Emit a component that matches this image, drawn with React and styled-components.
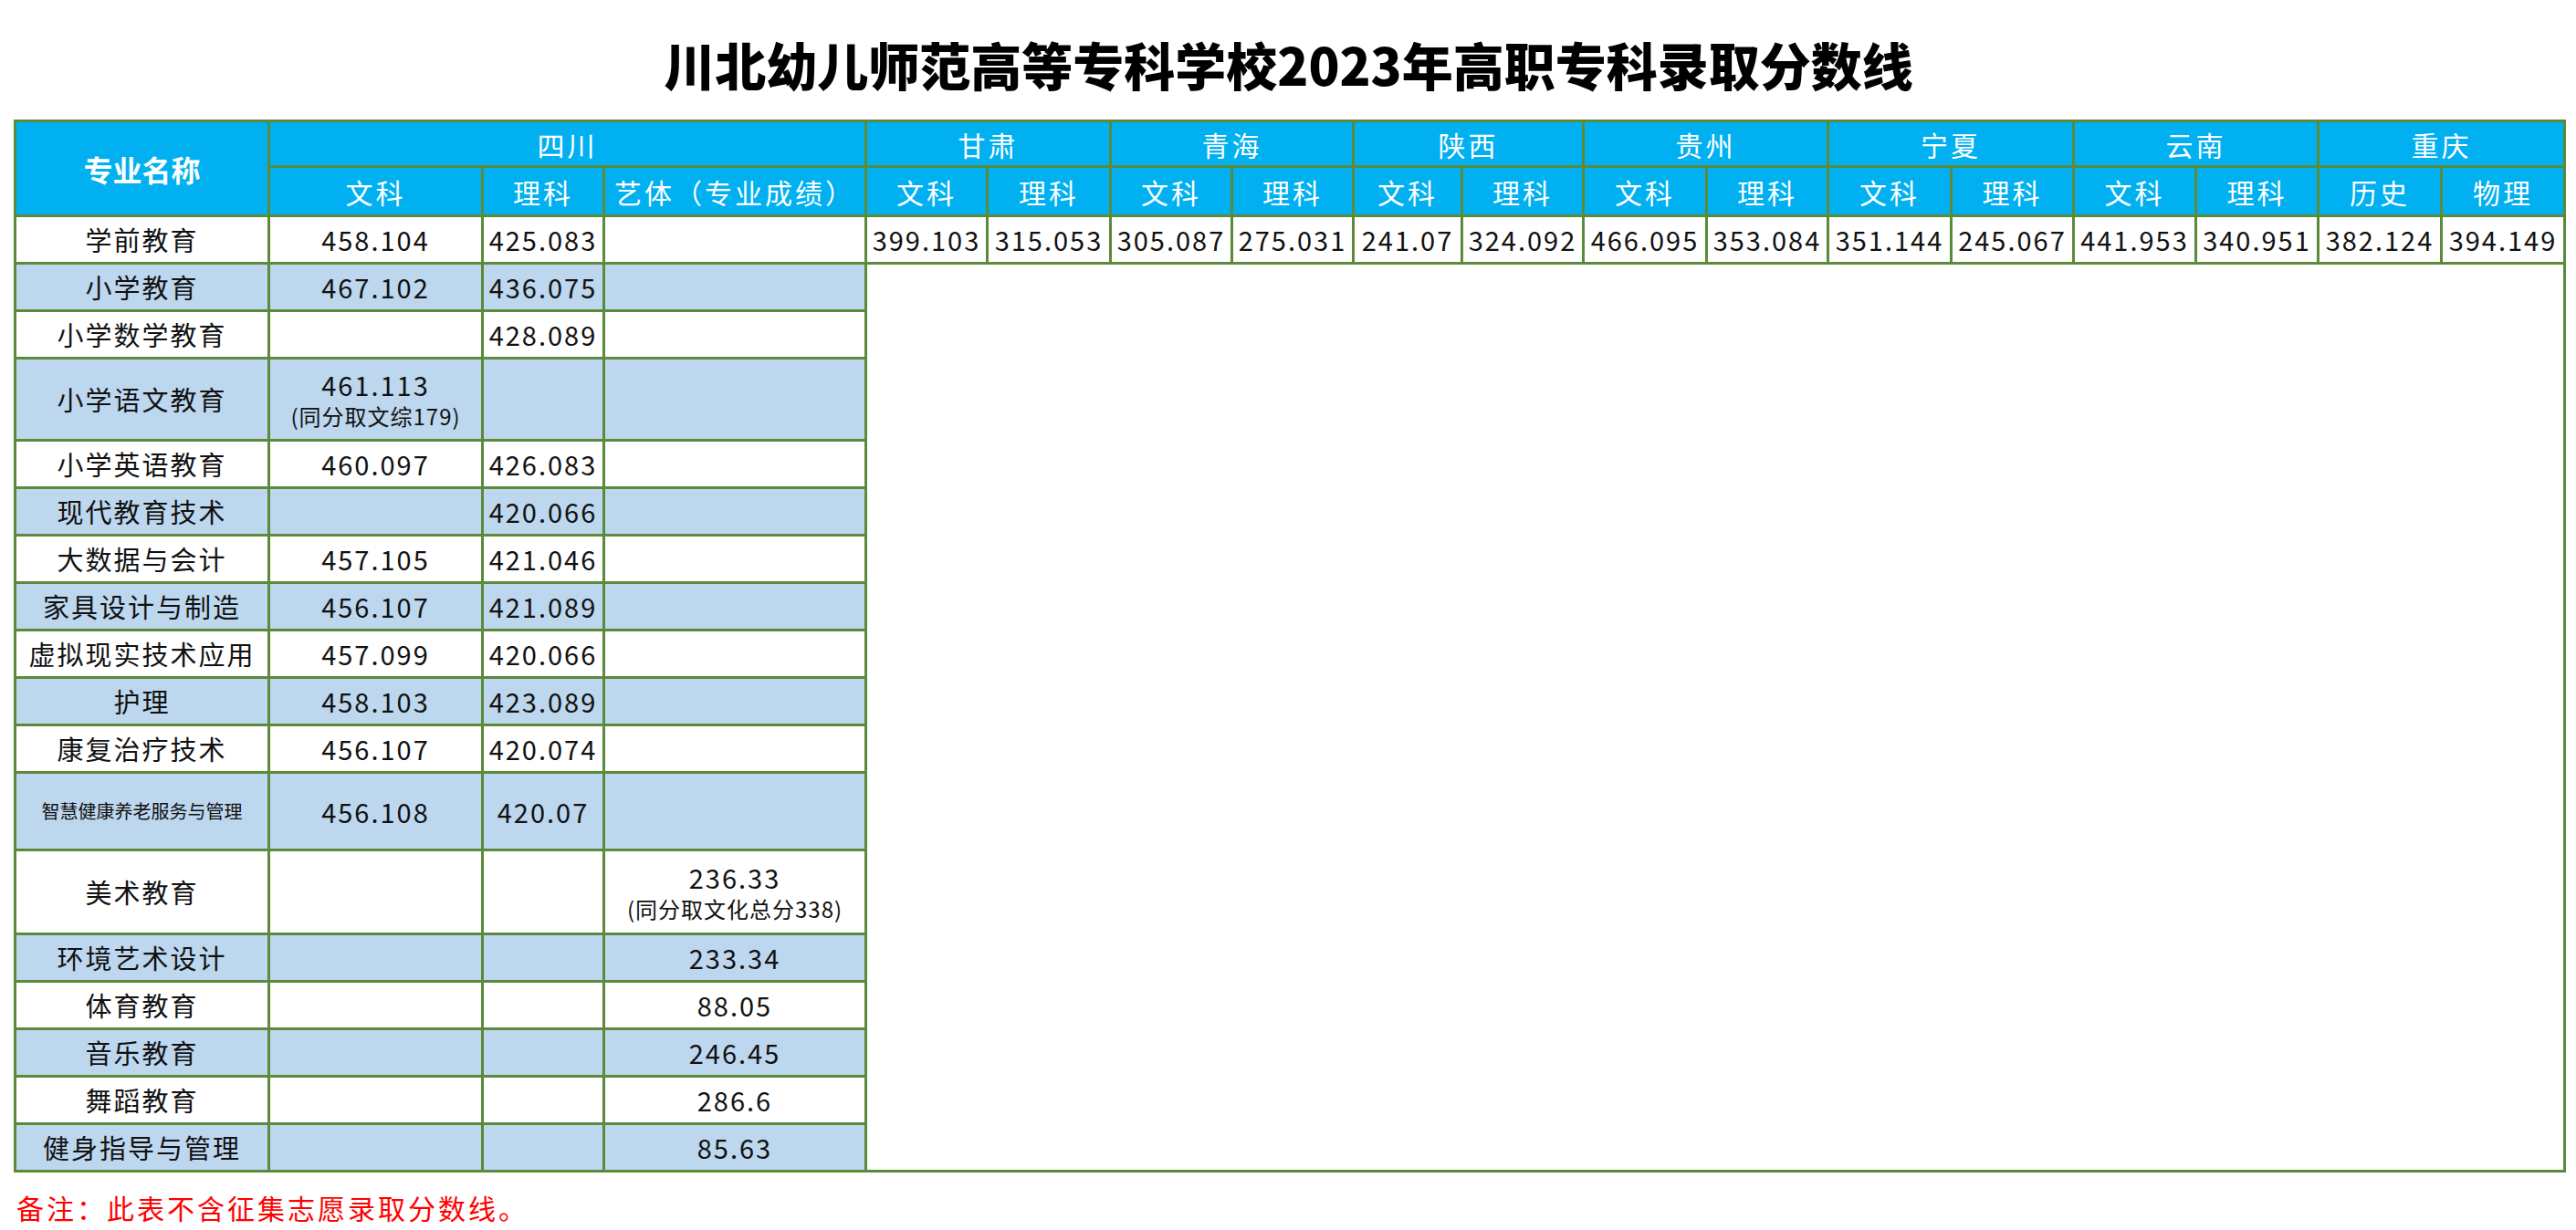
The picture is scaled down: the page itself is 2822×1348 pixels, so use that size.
import React from "react";
import styled, { createGlobalStyle } from "styled-components";

const Global = createGlobalStyle`
  html, body { margin: 0; padding: 0; background: #fff; }
  body { font-family: "Noto Sans CJK SC", "Noto Sans", sans-serif; }
`;

const Page = styled.div`
  width: 2822px;
  padding: 0 14px 0 15px;
  box-sizing: border-box;
`;

const Title = styled.h1`
  margin: 0;
  height: 131px;
  display: flex;
  align-items: center;
  justify-content: center;
  padding-top: 8px;
  box-sizing: border-box;
  font-family: "Noto Sans CJK SC", sans-serif;
  font-weight: 900;
  font-size: 56px;
  letter-spacing: 0;
  color: #000;
`;

const Table = styled.table`
  border-collapse: collapse;
  table-layout: fixed;
  width: 2793px;
  border: 3px solid #5b8a3a;
`;

const Th = styled.th`
  background: #00b0f0;
  color: #fff;
  font-weight: ${p => (p.$bold ? 700 : 400)};
  font-size: ${p => (p.$bold ? 32 : 30)}px;
  letter-spacing: ${p => (p.$bold ? 0 : 3)}px;
  border: 3px solid #5b8a3a;
  padding: 0;
  text-align: center;
  white-space: nowrap;
`;

const HeadRow = styled.tr`
  height: ${p => p.$h}px;
`;

const Row = styled.tr`
  height: ${p => p.$h}px;
`;

const Td = styled.td`
  background: ${p => (p.$alt ? "#bdd7ee" : "#fff")};
  color: #111;
  font-size: ${p => (p.$small ? 20 : 29)}px;
  letter-spacing: ${p => (p.$small ? 0 : 2)}px;
  border: 3px solid #5b8a3a;
  padding: 0;
  text-align: center;
  line-height: 1.2;
  white-space: nowrap;
  overflow: hidden;
`;

const Blank = styled.td`
  background: #fff;
  border: 3px solid #5b8a3a;
`;

const Footer = styled.div`
  color: #ff0000;
  font-size: 30px;
  letter-spacing: 3px;
  padding: 16px 0 0 3px;
`;

const NoteText = styled.span`
  display: block;
  font-size: 24px;
  line-height: 1.3;
  letter-spacing: 1px;
  margin-top: 2px;
`;

const widths = [278, 234, 133, 287, 133, 135, 133, 133, 119, 133, 135, 133, 135, 134, 134, 134, 135, 135];

const provinces = ["甘肃", "青海", "陕西", "贵州", "宁夏", "云南", "重庆"];
const subs = ["文科", "理科", "文科", "理科", "文科", "理科", "文科", "理科", "文科", "理科", "文科", "理科", "历史", "物理"];
const firstRight = ["399.103", "315.053", "305.087", "275.031", "241.07", "324.092", "466.095", "353.084", "351.144", "245.067", "441.953", "340.951", "382.124", "394.149"];

const rows = [
  { n: "小学教育", w: "467.102", l: "436.075", a: "", h: 52 },
  { n: "小学数学教育", w: "", l: "428.089", a: "", h: 52 },
  { n: "小学语文教育", w: "461.113", wn: "(同分取文综179)", l: "", a: "", h: 90 },
  { n: "小学英语教育", w: "460.097", l: "426.083", a: "", h: 52 },
  { n: "现代教育技术", w: "", l: "420.066", a: "", h: 52 },
  { n: "大数据与会计", w: "457.105", l: "421.046", a: "", h: 52 },
  { n: "家具设计与制造", w: "456.107", l: "421.089", a: "", h: 52 },
  { n: "虚拟现实技术应用", w: "457.099", l: "420.066", a: "", h: 52 },
  { n: "护理", w: "458.103", l: "423.089", a: "", h: 52 },
  { n: "康复治疗技术", w: "456.107", l: "420.074", a: "", h: 52 },
  { n: "智慧健康养老服务与管理", small: true, w: "456.108", l: "420.07", a: "", h: 85 },
  { n: "美术教育", w: "", l: "", a: "236.33", an: "(同分取文化总分338)", h: 92 },
  { n: "环境艺术设计", w: "", l: "", a: "233.34", h: 52 },
  { n: "体育教育", w: "", l: "", a: "88.05", h: 52 },
  { n: "音乐教育", w: "", l: "", a: "246.45", h: 52 },
  { n: "舞蹈教育", w: "", l: "", a: "286.6", h: 52 },
  { n: "健身指导与管理", w: "", l: "", a: "85.63", h: 52 },
];

export default function App() {
  return (
    <Page>
      <Global />
      <Title>川北幼儿师范高等专科学校2023年高职专科录取分数线</Title>
      <Table>
        <colgroup>
          {widths.map((w, i) => (
            <col key={i} style={{ width: w }} />
          ))}
        </colgroup>
        <thead>
          <HeadRow $h={50}>
            <Th rowSpan={2} $bold>专业名称</Th>
            <Th colSpan={3}>四川</Th>
            {provinces.map(p => (
              <Th key={p} colSpan={2}>{p}</Th>
            ))}
          </HeadRow>
          <HeadRow $h={54}>
            <Th>文科</Th>
            <Th>理科</Th>
            <Th>艺体（专业成绩）</Th>
            {subs.map((s, i) => (
              <Th key={i}>{s}</Th>
            ))}
          </HeadRow>
        </thead>
        <tbody>
          <Row $h={52}>
            <Td>学前教育</Td>
            <Td>458.104</Td>
            <Td>425.083</Td>
            <Td></Td>
            {firstRight.map((v, i) => (
              <Td key={i}>{v}</Td>
            ))}
          </Row>
          {rows.map((r, i) => {
            const alt = i % 2 === 0;
            return (
              <Row key={r.n} $h={r.h}>
                <Td $alt={alt} $small={r.small}>{r.n}</Td>
                <Td $alt={alt}>
                  {r.w}
                  {r.wn && <NoteText>{r.wn}</NoteText>}
                </Td>
                <Td $alt={alt}>{r.l}</Td>
                <Td $alt={alt}>
                  {r.a}
                  {r.an && <NoteText>{r.an}</NoteText>}
                </Td>
                {i === 0 && <Blank colSpan={14} rowSpan={rows.length} />}
              </Row>
            );
          })}
        </tbody>
      </Table>
      <Footer>备注：此表不含征集志愿录取分数线。</Footer>
    </Page>
  );
}
